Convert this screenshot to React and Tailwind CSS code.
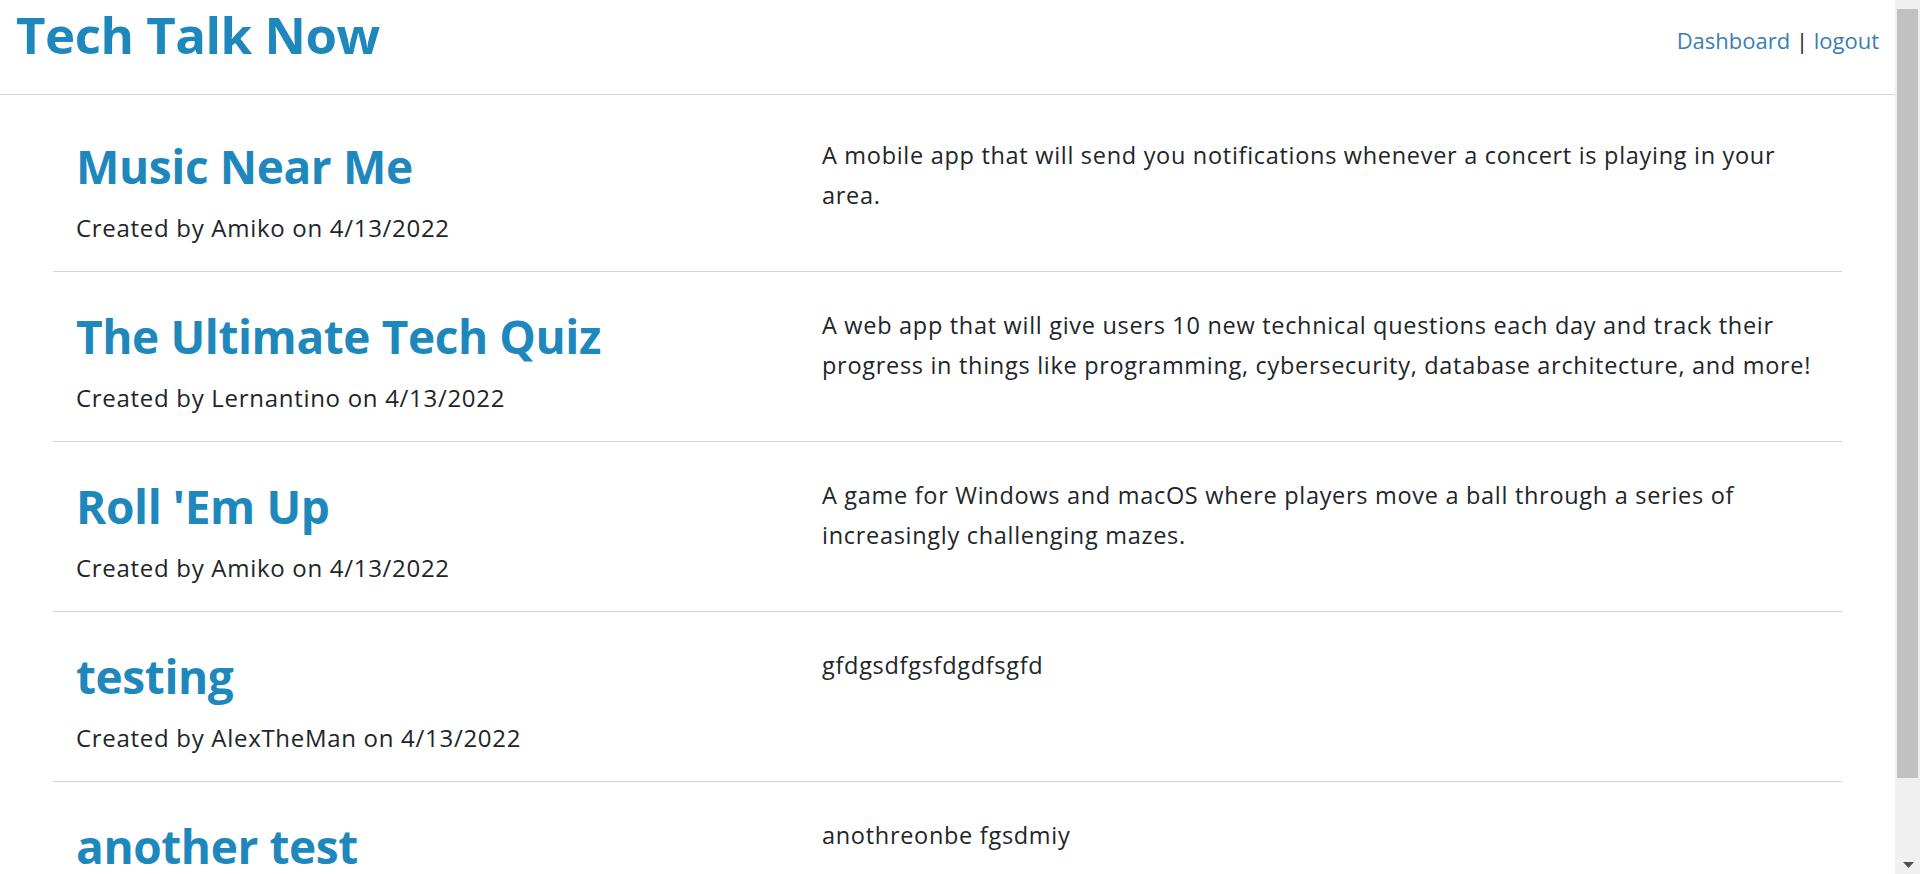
const posts = [
  {
    title: 'Music Near Me',
    author: 'Amiko',
    date: '4/13/2022',
    body: 'A mobile app that will send you notifications whenever a concert is playing in your area.',
  },
  {
    title: 'The Ultimate Tech Quiz',
    author: 'Lernantino',
    date: '4/13/2022',
    body: 'A web app that will give users 10 new technical questions each day and track their progress in things like programming, cybersecurity, database architecture, and more!',
  },
  {
    title: "Roll 'Em Up",
    author: 'Amiko',
    date: '4/13/2022',
    body: 'A game for Windows and macOS where players move a ball through a series of increasingly challenging mazes.',
  },
  {
    title: 'testing',
    author: 'AlexTheMan',
    date: '4/13/2022',
    body: 'gfdgsdfgsfdgdfsgfd',
  },
  {
    title: 'another test',
    author: 'AlexTheMan',
    date: '4/13/2022',
    body: 'anothreonbe fgsdmiy',
  },
];

function Header() {
  return (
    <header className="h-[95px] shrink-0 flex items-start justify-between border-b border-[#d4d4d4] pl-[16px] pr-[16px]">
      <h1 className="mt-[2px] text-[51px] leading-[64px] font-bold text-[#1e88bd] tracking-[-0.5px]">Tech Talk Now</h1>
      <nav className="mt-[24px] text-[22px] leading-[32px] text-[#212529]">
        <a href="#" className="text-[#3b7fb2]">Dashboard</a>
        <span> | </span>
        <a href="#" className="text-[#3b7fb2]">logout</a>
      </nav>
    </header>
  );
}

function PostRow({ post }) {
  return (
    <article className="h-[170px] shrink-0 flex border-b border-[#d4d4d4] px-[23px]">
      {/* title + meta */}
      <div className="w-[746px] shrink-0 pt-[34px]">
        <h2 className="text-[46px] leading-[60px] font-bold text-[#1e88bd] tracking-[-0.4px]">{post.title}</h2>
        <p className="mt-[16px] text-[24px] leading-[32px] tracking-[0.7px] text-[#212529]">
          Created by {post.author} on {post.date}
        </p>
      </div>

      {/* description */}
      <div className="flex-1 pt-[33px]">
        <p className="text-[23.5px] leading-[40px] tracking-[0.7px] text-[#212529]">{post.body}</p>
      </div>
    </article>
  );
}

function FakeScrollbar() {
  return (
    <div className="w-[25px] shrink-0 h-full bg-[#f0f0f0] flex flex-col">
      <div className="h-[9px]" />
      <div className="ml-[2px] w-[21px] h-[769px] bg-[#c1c1c1]" />
      <div className="flex-1" />
      <div className="h-[12px] flex items-start justify-center pl-[1px]">
        <svg width="11" height="6" viewBox="0 0 11 6">
          <path d="M0 0 H11 L5.5 6 Z" fill="#505050" />
        </svg>
      </div>
    </div>
  );
}

export default function App() {
  return (
    <div className="h-screen w-full flex overflow-hidden bg-white font-['Open_Sans',sans-serif]">
      <div className="flex-1 flex flex-col overflow-hidden">
        <Header />
        <main className="flex flex-col pl-[53px] pr-[53px] pt-[7px]">
          {posts.map((p) => (
            <PostRow key={p.title} post={p} />
          ))}
        </main>
      </div>
      <FakeScrollbar />
    </div>
  );
}
